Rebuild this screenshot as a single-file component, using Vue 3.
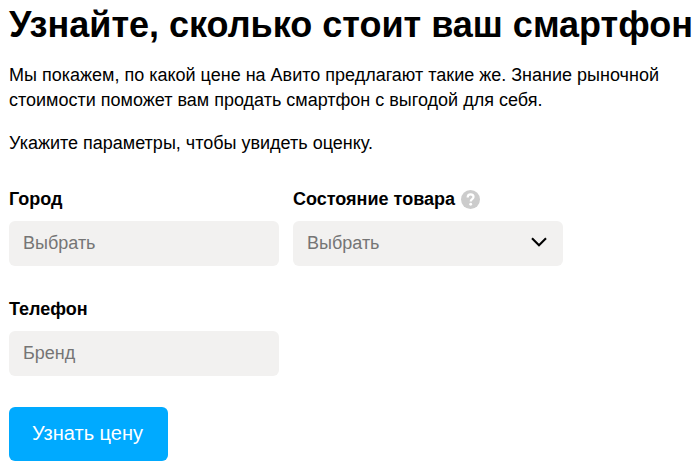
<script setup>
import { ref } from 'vue'

const city = ref('')
const condition = ref('')
const phone = ref('')
</script>

<template>
  <main class="page">
    <h1 class="title">Узнайте, сколько стоит ваш смартфон</h1>
    <p class="text">
      Мы покажем, по какой цене на Авито предлагают такие же. Знание рыночной
      стоимости поможет вам продать смартфон с выгодой для себя.
    </p>
    <p class="text">Укажите параметры, чтобы увидеть оценку.</p>

    <form class="form" @submit.prevent>
      <div class="fields">
        <div class="field">
          <label class="label" for="city">Город</label>
          <input id="city" v-model="city" class="control" type="text" placeholder="Выбрать" />
        </div>
        <div class="field">
          <div class="label-row">
            <label class="label" for="condition">Состояние товара</label>
            <svg class="help" viewBox="0 0 20 20" aria-hidden="true">
              <circle cx="10" cy="10" r="10" fill="#ccc" />
              <path d="M7 7.9C7 5.7 8.2 4.6 10.1 4.6S13.2 5.8 13.2 7.4C13.2 9.7 10.2 9.6 10.2 12.2" fill="none" stroke="#fff" stroke-width="2.3" />
              <circle cx="10.2" cy="15" r="1.5" fill="#fff" />
            </svg>
          </div>
          <div class="select">
            <select id="condition" v-model="condition" class="control">
              <option value="">Выбрать</option>
            </select>
            <svg class="chevron" viewBox="0 0 16 10" aria-hidden="true">
              <path d="M1 1.2L8 8.2L15 1.2" fill="none" stroke="#000" stroke-width="2.1" />
            </svg>
          </div>
        </div>
        <div class="field">
          <label class="label" for="phone">Телефон</label>
          <input id="phone" v-model="phone" class="control" type="text" placeholder="Бренд" />
        </div>
      </div>
      <button class="submit" type="submit">Узнать цену</button>
    </form>
  </main>
</template>

<style>
body {
  background: #fff;
}
</style>

<style scoped>
.page {
  padding: 4px 0 8px 9px;
  color: #000;
  font-family: "Liberation Sans", Arial, sans-serif;
  font-size: 18px;
  line-height: 25px;
}
.title {
  margin: 0 0 18px;
  font-size: 36px;
  line-height: 41px;
  white-space: nowrap;
}
.text {
  max-width: 670px;
  margin: 0 0 18px;
}
.form {
  padding-top: 13px;
}
.fields {
  display: grid;
  grid-template-columns: repeat(2, 270px);
  gap: 31px 14px;
}
.field {
  display: flex;
  flex-direction: column;
  gap: 9px;
}
.label-row {
  display: flex;
  align-items: center;
  gap: 6px;
}
.label {
  font-weight: 700;
}
.help {
  width: 19px;
  height: 19px;
}
.control {
  box-sizing: border-box;
  width: 100%;
  height: 45px;
  padding: 0 14px;
  border: 0;
  border-radius: 6px;
  background: #f2f1f0;
  color: #757575;
  font: inherit;
  appearance: none;
}
.control::placeholder {
  color: #757575;
  opacity: 1;
}
.select {
  position: relative;
}
.select .control {
  display: block;
}
.chevron {
  position: absolute;
  top: 16px;
  right: 16px;
  width: 16px;
  height: 10px;
  pointer-events: none;
}
.submit {
  height: 54px;
  margin-top: 31px;
  padding: 0 25px 2px 23px;
  border: 0;
  border-radius: 6px;
  background: #0af;
  color: #fff;
  font: inherit;
  font-size: 20px;
}
</style>
